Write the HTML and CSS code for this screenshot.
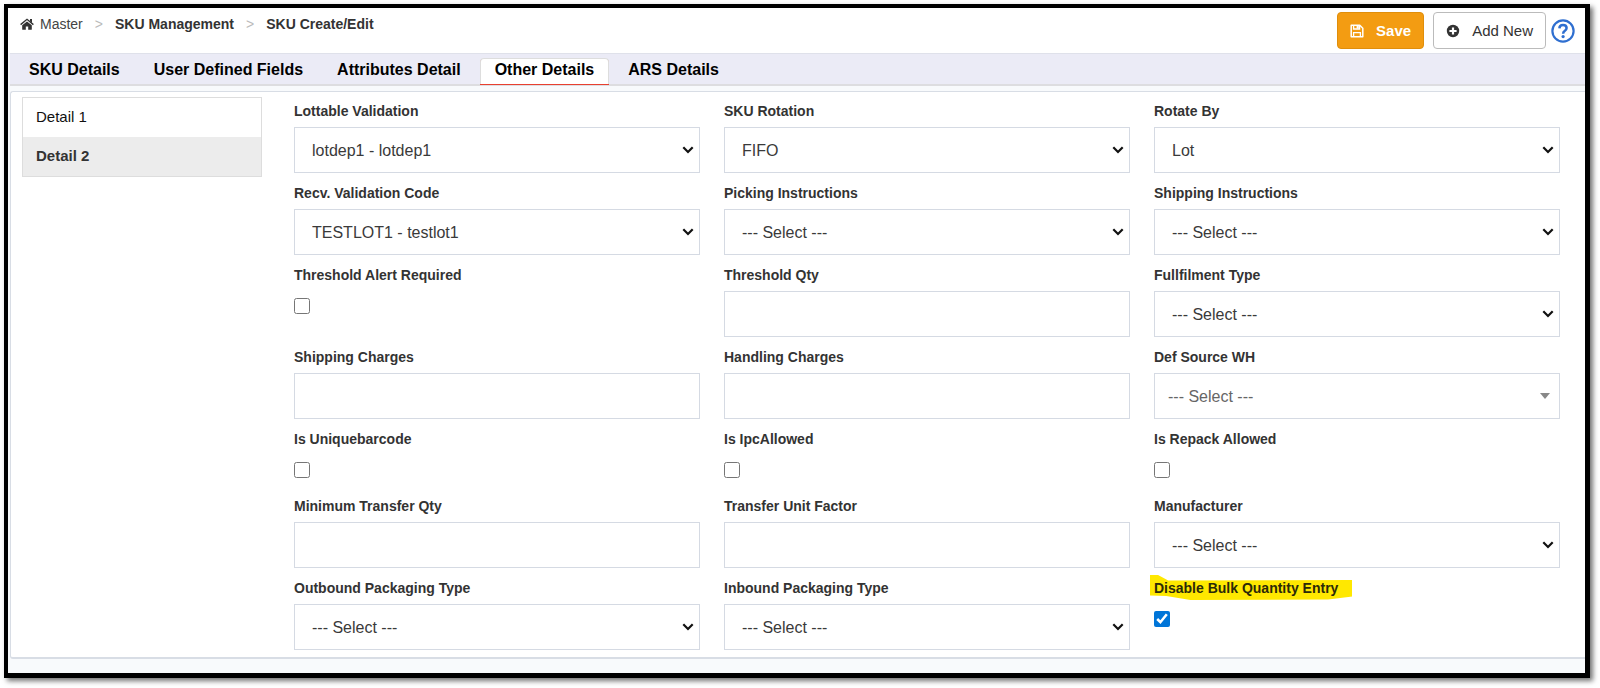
FILE: index.html
```html
<!DOCTYPE html>
<html lang="en">
<head>
<meta charset="utf-8">
<title>SKU Create/Edit</title>
<link rel="stylesheet" href="styles.css">
</head>
<body>
<div class="frame">
  <header class="topbar">
    <nav class="crumbs" aria-label="Breadcrumb">
      <a class="crumb crumb-home" href="#"><svg class="icon-home" viewBox="0 0 14 12" width="14" height="12" aria-hidden="true"><path d="M7 3.4 11.8 7.2V11.2Q11.8 11.8 11.2 11.8H8.2V8.4H5.8V11.8H2.8Q2.2 11.8 2.2 11.2V7.2Z" fill="#333"/><path d="M.6 6.6 7 1.3 13.4 6.6" fill="none" stroke="#333" stroke-width="1.4"/><path d="M10 1H12V5L10 3.3Z" fill="#333"/></svg>Master</a>
      <span class="sep">&gt;</span>
      <a class="crumb crumb-strong" href="#">SKU Management</a>
      <span class="sep">&gt;</span>
      <a class="crumb crumb-strong" href="#">SKU Create/Edit</a>
    </nav>
    <div class="actions">
      <button class="btn btn-save" type="button"><svg viewBox="0 0 14 14" width="14" height="14" aria-hidden="true"><path d="M1.2 1.2H9.8L12.8 4.2V12.8H1.2Z" fill="none" stroke="#fff" stroke-width="1.5" stroke-linejoin="round"/><path d="M3.6 1.2V5H9.6V1.2M3.6 12.8V8.6H10.4V12.8" fill="none" stroke="#fff" stroke-width="1.3"/><path d="M6.6 1.5H8.8V4.6H6.6Z" fill="#fff"/></svg>Save</button>
      <button class="btn btn-add" type="button"><svg viewBox="0 0 14 14" width="14" height="14" aria-hidden="true"><circle cx="7" cy="7" r="6.2" fill="#333"/><path d="M7 3.4V10.6M3.4 7H10.6" stroke="#fff" stroke-width="2.2"/></svg>Add New</button>
      <button class="help" type="button" aria-label="Help"><svg viewBox="0 0 24 24" width="24" height="24" aria-hidden="true"><circle cx="12" cy="12" r="10.6" fill="#fff" stroke="#2f6fd0" stroke-width="2.2"/><path d="M8.4 9.4Q8.5 6 12 6 15.6 6 15.6 9 15.6 10.5 13.9 11.7 12.1 12.9 12.1 14.8" fill="none" stroke="#2f6fd0" stroke-width="2.5"/><circle cx="12.1" cy="17.6" r="1.6" fill="#2f6fd0"/></svg></button>
    </div>
  </header>

  <nav class="tabs" aria-label="SKU sections">
    <a class="tab" href="#">SKU Details</a>
    <a class="tab" href="#">User Defined Fields</a>
    <a class="tab" href="#">Attributes Detail</a>
    <a class="tab tab-active" href="#" aria-current="page">Other Details</a>
    <a class="tab" href="#">ARS Details</a>
  </nav>

  <main class="panel">
    <nav class="side" aria-label="Details">
      <a class="side-item" href="#">Detail 1</a>
      <a class="side-item side-active" href="#">Detail 2</a>
    </nav>

    <form class="fields">
      <div class="field"><label for="lottable">Lottable Validation</label><select id="lottable" class="control"><option>lotdep1 - lotdep1</option></select></div>
      <div class="field"><label for="rotation">SKU Rotation</label><select id="rotation" class="control"><option>FIFO</option></select></div>
      <div class="field"><label for="rotateby">Rotate By</label><select id="rotateby" class="control"><option>Lot</option></select></div>

      <div class="field"><label for="recv">Recv. Validation Code</label><select id="recv" class="control"><option>TESTLOT1 - testlot1</option></select></div>
      <div class="field"><label for="picking">Picking Instructions</label><select id="picking" class="control"><option>--- Select ---</option></select></div>
      <div class="field"><label for="shipping">Shipping Instructions</label><select id="shipping" class="control"><option>--- Select ---</option></select></div>

      <div class="field"><label for="alert">Threshold Alert Required</label><input id="alert" class="check" type="checkbox"></div>
      <div class="field"><label for="threshold">Threshold Qty</label><input id="threshold" class="control" type="text"></div>
      <div class="field"><label for="fulfil">Fullfilment Type</label><select id="fulfil" class="control"><option>--- Select ---</option></select></div>

      <div class="field"><label for="shipcharge">Shipping Charges</label><input id="shipcharge" class="control" type="text"></div>
      <div class="field"><label for="handling">Handling Charges</label><input id="handling" class="control" type="text"></div>
      <div class="field"><label for="source">Def Source WH</label><select id="source" class="control control-search"><option>--- Select ---</option></select></div>

      <div class="field"><label for="unique">Is Uniquebarcode</label><input id="unique" class="check" type="checkbox"></div>
      <div class="field"><label for="ipc">Is IpcAllowed</label><input id="ipc" class="check" type="checkbox"></div>
      <div class="field"><label for="repack">Is Repack Allowed</label><input id="repack" class="check" type="checkbox"></div>

      <div class="field"><label for="mintransfer">Minimum Transfer Qty</label><input id="mintransfer" class="control" type="text"></div>
      <div class="field"><label for="unitfactor">Transfer Unit Factor</label><input id="unitfactor" class="control" type="text"></div>
      <div class="field"><label for="manufacturer">Manufacturer</label><select id="manufacturer" class="control"><option>--- Select ---</option></select></div>

      <div class="field"><label for="outbound">Outbound Packaging Type</label><select id="outbound" class="control"><option>--- Select ---</option></select></div>
      <div class="field"><label for="inbound">Inbound Packaging Type</label><select id="inbound" class="control"><option>--- Select ---</option></select></div>
      <div class="field"><label class="marked" for="bulk">Disable Bulk Quantity Entry</label><input id="bulk" class="check" type="checkbox" checked></div>
    </form>
  </main>
</div>
</body>
</html>
```
FILE: styles.css
```css
* {
  box-sizing: border-box;
}

body {
  margin: 0;
  padding: 4px 10px 10px 4px;
  background: #fff;
  color: #333;
  font-family: "Liberation Sans", Arial, sans-serif;
  font-size: 14px;
}

a {
  color: inherit;
  text-decoration: none;
}

.frame {
  padding-bottom: 14px;
  border: solid #000;
  border-width: 4px 5px 5px 4px;
  background: #f8fafc;
  box-shadow: 3px 3px 5px rgba(0, 0, 0, 0.55);
}

.topbar {
  display: flex;
  justify-content: space-between;
  align-items: flex-start;
  height: 45px;
  padding: 4px 10px 0 12px;
  background: #fff;
}

.crumbs {
  display: flex;
  align-items: center;
  padding-top: 4px;
  line-height: 16px;
}

.crumb-home {
  display: flex;
  align-items: center;
  gap: 6px;
  color: #444;
}

.crumb-strong {
  font-weight: bold;
}

.sep {
  padding: 0 12px;
  color: #bbb;
}

.actions {
  display: flex;
  align-items: center;
}

.btn {
  display: flex;
  align-items: center;
  height: 37px;
  padding: 0 12px;
  gap: 12px;
  border: 1px solid #bbb;
  border-radius: 4px;
  background: #fff;
  color: #333;
  font: 15px "Liberation Sans", Arial, sans-serif;
}

.btn-save {
  margin-right: 9px;
  border-color: #e08e0b;
  background: #f39c12;
  color: #fff;
  font-weight: bold;
}

.help {
  display: flex;
  margin-left: 5px;
  padding: 0;
  border: 0;
  background: none;
}

.tabs {
  display: flex;
  align-items: flex-end;
  gap: 4px;
  height: 33px;
  margin-left: 2px;
  padding-left: 4px;
  border-top: 1px solid #dfe1ea;
  border-bottom: 2px solid #dddde0;
  background: #ebebf6;
}

.tab {
  height: 26px;
  padding: 0 14px;
  border: 1px solid transparent;
  border-bottom: 0;
  border-radius: 4px 4px 0 0;
  color: #000;
  font-size: 16px;
  font-weight: bold;
  line-height: 22px;
}

.tab-active {
  border-color: #ddd;
  background: #fff;
  box-shadow: 0 1px 0 #e8402f;
}

.panel {
  display: flex;
  align-items: flex-start;
  margin: 5px 0 0 2px;
  padding: 5px 25px 7px 11px;
  border: solid #d8dde5;
  border-width: 1px 0 2px 1px;
  border-radius: 3px 0 0 3px;
  background: #fff;
}

.side {
  flex: none;
  width: 240px;
  border: 1px solid #ddd;
}

.side-item {
  display: block;
  height: 39px;
  padding: 0 13px;
  color: #111;
  font-size: 15px;
  line-height: 37px;
}

.side-active {
  background: #ececec;
  color: #333;
  font-weight: bold;
}

.fields {
  flex: 1;
  display: grid;
  grid-template-columns: repeat(3, minmax(0, 1fr));
  gap: 12px 24px;
  margin-left: 32px;
  padding-top: 6px;
}

.field {
  display: flex;
  flex-direction: column;
  align-items: flex-start;
  gap: 8px;
}

.field label {
  font-weight: bold;
  line-height: 17px;
  height: 16px;
}

.control {
  appearance: none;
  width: 100%;
  height: 46px;
  padding: 0 17px;
  border: 1px solid #d5dae3;
  border-radius: 0;
  background: #fff right 5px center no-repeat;
  color: #3a3a3a;
  font: 16px "Liberation Sans", Arial, sans-serif;
}

select.control {
  background-image: url("data:image/svg+xml,%3Csvg xmlns='http://www.w3.org/2000/svg' width='12' height='8'%3E%3Cpath d='M1.3 1.3L6 6L10.7 1.3' fill='none' stroke='%23111' stroke-width='2.2'/%3E%3C/svg%3E");
}

select.control-search {
  padding-left: 13px;
  background-image: url("data:image/svg+xml,%3Csvg xmlns='http://www.w3.org/2000/svg' width='10' height='6'%3E%3Cpath d='M0 0H10L5 6Z' fill='%23888'/%3E%3C/svg%3E");
  background-position: right 9px center;
  color: #666;
}

.check {
  width: 16px;
  height: 16px;
  margin: 7px 0 8px;
  accent-color: #0075d8;
}

.field .marked {
  position: relative;
  z-index: 0;
  color: #2b2a08;
}

.marked::before {
  content: "";
  position: absolute;
  z-index: -1;
  inset: -5px -14px -4px -4px;
  background: #ffe800;
  clip-path: polygon(0 0, 4% 0, 9% 22%, 100% 20%, 100% 86%, 88% 98%, 20% 100%, 8% 84%, 0 82%);
}
```
